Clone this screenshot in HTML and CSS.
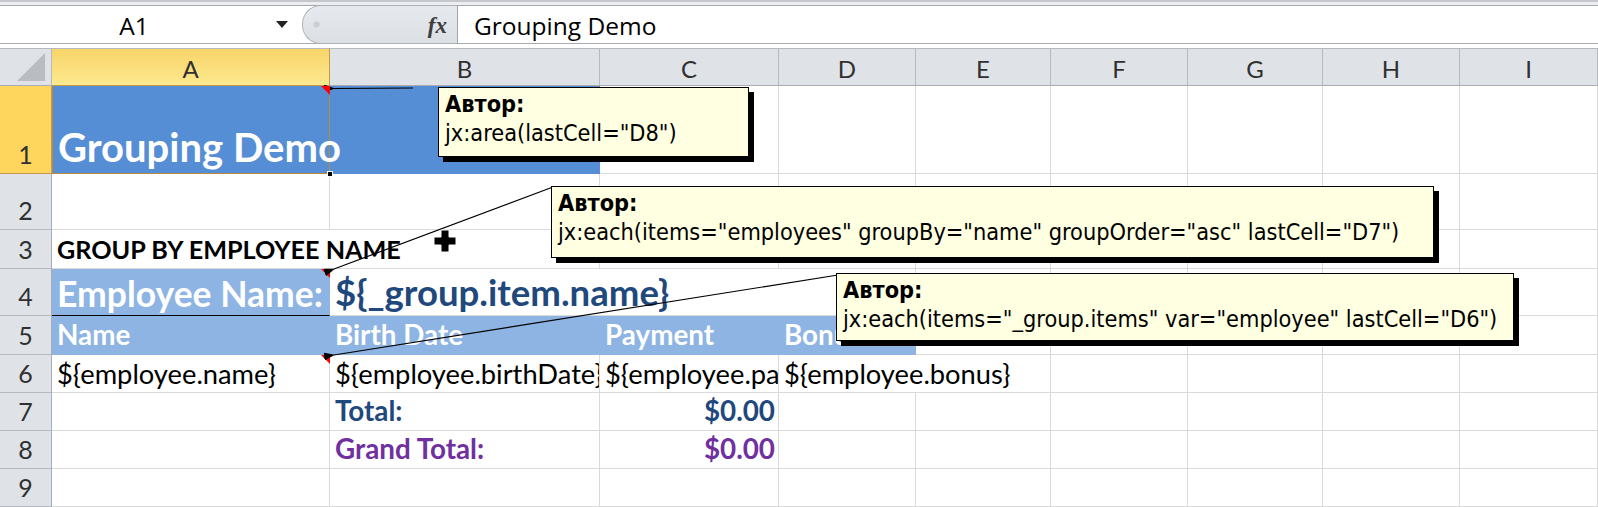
FILE: index.html
```html
<!DOCTYPE html>
<html>
<head>
<meta charset="utf-8">
<link rel="stylesheet" href="styles.css">
</head>
<body>
<div class="app">
  <div class="topstrip"></div>
  <div class="fbar">
    <div class="namebox"><span class="nb-text">A1</span><span class="nb-arrow"></span></div>
    <div class="pill"><span class="pill-dot"></span><span class="fx">fx</span></div>
    <div class="finput">Grouping Demo</div>
  </div>
  <div class="gap"></div>
  <div class="sheet">
    <!-- header row -->
    <div class="hc corner"><span class="tri"></span></div>
    <div class="hc col sel">A</div>
    <div class="hc col">B</div>
    <div class="hc col">C</div>
    <div class="hc col">D</div>
    <div class="hc col">E</div>
    <div class="hc col">F</div>
    <div class="hc col">G</div>
    <div class="hc col">H</div>
    <div class="hc col">I</div>

    <!-- row 1 -->
    <div class="rh rsel">1</div>
    <div class="c fill1 a1 title"><span>Grouping Demo</span><i class="ind"></i><i class="handle"></i></div>
    <div class="c fill1"></div>
    <div class="c"></div><div class="c"></div><div class="c"></div><div class="c"></div><div class="c"></div><div class="c"></div><div class="c"></div>

    <!-- row 2 -->
    <div class="rh">2</div>
    <div class="c"></div><div class="c"></div><div class="c"></div><div class="c"></div><div class="c"></div><div class="c"></div><div class="c"></div><div class="c"></div><div class="c"></div>

    <!-- row 3 -->
    <div class="rh">3</div>
    <div class="c span2 bold caps">GROUP BY EMPLOYEE NAME</div>
    <div class="c"></div><div class="c"></div><div class="c"></div><div class="c"></div><div class="c"></div><div class="c"></div><div class="c"></div>

    <!-- row 4 -->
    <div class="rh">4</div>
    <div class="c fill2 big white a4">Employee Name:<i class="ind"></i></div>
    <div class="c span3 big navy grp">${_group.item.name}</div>
    <div class="c"></div><div class="c"></div><div class="c"></div><div class="c"></div><div class="c"></div>

    <!-- row 5 -->
    <div class="rh">5</div>
    <div class="c fill2 bold white">Name</div>
    <div class="c fill2 bold white">Birth Date</div>
    <div class="c fill2 bold white">Payment</div>
    <div class="c fill2 bold white">Bonus</div>
    <div class="c"></div><div class="c"></div><div class="c"></div><div class="c"></div><div class="c"></div>

    <!-- row 6 -->
    <div class="rh">6</div>
    <div class="c">${employee.name}<i class="ind"></i></div>
    <div class="c clip">${employee.birthDate}</div>
    <div class="c clip">${employee.payment}</div>
    <div class="c span2">${employee.bonus}</div>
    <div class="c"></div><div class="c"></div><div class="c"></div><div class="c"></div>

    <!-- row 7 -->
    <div class="rh">7</div>
    <div class="c"></div>
    <div class="c bold navy">Total:</div>
    <div class="c bold navy right">$0.00</div>
    <div class="c"></div><div class="c"></div><div class="c"></div><div class="c"></div><div class="c"></div><div class="c"></div>

    <!-- row 8 -->
    <div class="rh">8</div>
    <div class="c"></div>
    <div class="c bold purple">Grand Total:</div>
    <div class="c bold purple right">$0.00</div>
    <div class="c"></div><div class="c"></div><div class="c"></div><div class="c"></div><div class="c"></div><div class="c"></div>

    <!-- row 9 -->
    <div class="rh">9</div>
    <div class="c"></div><div class="c"></div><div class="c"></div><div class="c"></div><div class="c"></div><div class="c"></div><div class="c"></div><div class="c"></div><div class="c"></div>
  </div>

  <svg class="lines" width="1598" height="507" viewBox="0 0 1598 507">
    <defs>
      <marker id="ah" markerWidth="11" markerHeight="8" refX="1" refY="4" orient="auto" markerUnits="userSpaceOnUse">
        <path d="M11 0 L0 4 L11 8 Z" fill="#000"/>
      </marker>
    </defs>
    <line x1="413" y1="88" x2="334" y2="88.5" stroke="#000" stroke-width="1.2" marker-end="url(#ah)"/>
    <line x1="553" y1="187" x2="334" y2="269" stroke="#000" stroke-width="1.2" marker-end="url(#ah)"/>
    <line x1="838" y1="275" x2="334" y2="355" stroke="#000" stroke-width="1.2" marker-end="url(#ah)"/>
    <path d="M441 230 h8 v7 h7 v8 h-7 v7 h-8 v-7 h-7 v-8 h7 Z" fill="#000" stroke="#fff" stroke-width="1"/>
  </svg>

  <div class="note n1"><b>Автор:</b><br>jx:area(lastCell="D8")</div>
  <div class="note n2"><b>Автор:</b><br>jx:each(items="employees" groupBy="name" groupOrder="asc" lastCell="D7")</div>
  <div class="note n3"><b>Автор:</b><br>jx:each(items="_group.items" var="employee" lastCell="D6")</div>
</div>
</body>
</html>
```

FILE: styles.css
```css
* { box-sizing: border-box; }
html, body { margin: 0; padding: 0; background: #fff; }
.app {
  position: relative;
  width: 1598px;
  height: 507px;
  overflow: hidden;
  font-family: "Lato", "Open Sans", sans-serif;
}
.topstrip {
  height: 6px;
  background: #eceef1;
  border-top: 2px solid #c4c8cd;
  border-bottom: 1px solid #a3a7ad;
}
.fbar {
  height: 38px;
  display: flex;
  align-items: stretch;
  border-bottom: 1px solid #a8acb2;
  background: #fff;
  font-family: "Open Sans", "Noto Sans", sans-serif;
  font-size: 24.5px;
  color: #000;
}
.namebox {
  width: 302px;
  display: flex;
  align-items: center;
  position: relative;
}
.nb-text { width: 268px; text-align: center; padding-top: 2px; }
.nb-arrow {
  width: 0; height: 0;
  border-left: 6px solid transparent;
  border-right: 6px solid transparent;
  border-top: 7px solid #222;
  margin-left: 8px;
}
.pill {
  width: 156px;
  background: linear-gradient(#e6e9ed, #dcdfe4);
  border: 1px solid #aeb2b8;
  border-right: 1px solid #a0a4aa;
  border-radius: 19px 0 0 19px;
  display: flex;
  align-items: center;
  justify-content: space-between;
  padding: 0 10px 0 10px;
  margin-top: -1px;
  margin-bottom: -1px;
}
.pill-dot {
  width: 7px; height: 7px; border-radius: 50%;
  background: #c9ccd1;
  border: 1px solid #d6d9dd;
}
.fx {
  font-family: "Liberation Serif", "DejaVu Serif", serif;
  font-style: italic;
  font-weight: bold;
  font-size: 23px;
  color: #3e3e3e;
  padding-top: 2px;
}
.finput {
  flex: 1;
  display: flex;
  align-items: center;
  padding-left: 16px;
  padding-top: 2px;
}
.gap {
  height: 4px;
  background: #fff;
}
.sheet {
  display: grid;
  grid-template-columns: 52px 278px 270px 179px 137px 135px 137px 135px 137px 138px;
  grid-template-rows: 38px 88px 56px 39px 47px 39px 38px 38px 38px 38px;
}
.hc {
  background: #dfe3e8;
  border-right: 1px solid #b6bac0;
  border-bottom: 1px solid #a9adb3;
  border-top: 1px solid #b6bac0;
  color: #303030;
  font-size: 24px;
  display: flex;
  align-items: center;
  justify-content: center;
  padding-top: 3px;
}
.hc.sel {
  background: linear-gradient(#f8d468, #fde98f);
  border-right-color: #c29a4c;
  border-bottom-color: #c29a4c;
}
.corner { position: relative; }
.tri {
  position: absolute;
  right: 6px; bottom: 4px;
  width: 0; height: 0;
  border-left: 28px solid transparent;
  border-bottom: 28px solid #b9bdc2;
}
.rh {
  background: #dfe3e8;
  border-right: 1px solid #a9adb3;
  border-bottom: 1px solid #b6bac0;
  color: #303030;
  font-size: 25px;
  display: flex;
  align-items: flex-end;
  justify-content: center;
  line-height: 1;
  padding-bottom: 6px;
}
.rh.rsel {
  background: #fed65d;
  border-right-color: #c29a4c;
  border-bottom-color: #c29a4c;
}
.c {
  position: relative;
  border-right: 1px solid #dadada;
  border-bottom: 1px solid #dadada;
  display: flex;
  align-items: flex-end;
  white-space: nowrap;
  font-size: 27.3px;
  line-height: 1;
  padding: 0 4px 5px 5px;
  color: #000;
}
.span2 { grid-column: span 2; }
.span3 { grid-column: span 3; }
.clip { overflow: hidden; }
.bold { font-weight: bold; font-size: 27.8px; }
.caps { font-size: 25.2px; padding-bottom: 6px; }
.right { justify-content: flex-end; padding-right: 3px; }
.fill1 { background: #558ed5; border-color: #558ed5; }
.fill2 { background: #8db4e2; border-color: #8db4e2; }
.white { color: #fff; }
.navy { color: #1f497d; }
.purple { color: #7030a0; }
.big { font-size: 35.5px; font-weight: bold; padding-bottom: 4px; }
.grp { font-size: 36.6px; }
.title {
  font-size: 40px;
  font-weight: bold;
  color: #fff;
  padding-bottom: 6px;
}
.a1 {
  border: 1px solid #b98a3f;
  border-top: none;
  border-right: 1px solid #b98a3f;
  z-index: 2;
}
.a4 { border-bottom: 1px solid #000; }
.ind {
  position: absolute;
  right: -1px; top: 0;
  width: 0; height: 0;
  border-left: 9px solid transparent;
  border-top: 9px solid #f00;
}
.handle {
  position: absolute;
  right: -4px; bottom: -4px;
  width: 6px; height: 6px;
  background: #000;
  border: 1px solid #fff;
}
.lines {
  position: absolute;
  left: 0; top: 0;
  pointer-events: none;
}
.note {
  position: absolute;
  background: #ffffe1;
  border: 1px solid #000;
  box-shadow: 5px 5px 0 #000;
  font-family: "DejaVu Sans Condensed", "DejaVu Sans", sans-serif;
  font-stretch: condensed;
  font-size: 23.3px;
  line-height: 29px;
  padding: 1px 6px;
  color: #000;
  white-space: nowrap;
}
.n1 { left: 438px; top: 87px; width: 311px; height: 70px; }
.n2 { left: 551px; top: 186px; width: 883px; height: 72px; }
.n3 { left: 836px; top: 273px; width: 678px; height: 68px; }
```
